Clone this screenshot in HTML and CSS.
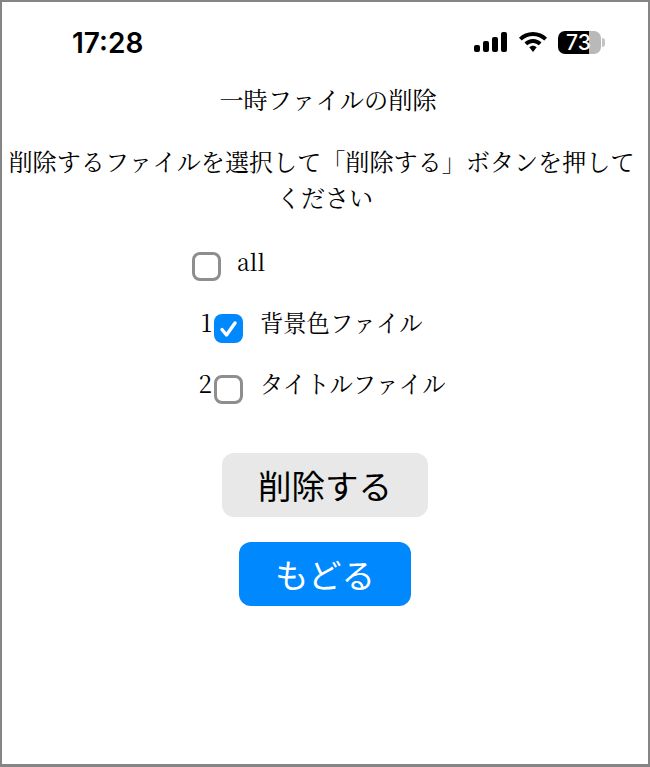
FILE: index.html
```html
<!DOCTYPE html>
<html lang="ja">
<head>
    <meta charset="UTF-8">
    <meta name="viewport" content="width=device-width, initial-scale=1.0">
    <title>一時ファイルの削除</title>
    <link rel="stylesheet" href="styles.css">
</head>
<body>
    <div class="screen">
        <div class="status-bar">
            <span class="clock">17:28</span>
            <div class="status-icons">
                <svg class="signal" width="33" height="20" viewBox="0 0 33 20">
                    <rect x="0" y="13" width="6" height="7" rx="2"/>
                    <rect x="9" y="9" width="6" height="11" rx="2"/>
                    <rect x="18" y="5" width="6" height="15" rx="2"/>
                    <rect x="27" y="0" width="6" height="20" rx="2"/>
                </svg>
                <svg class="wifi" width="28" height="20" viewBox="0 0 28 20">
                    <path d="M14 0 C19.500 0 24.500 2.200 28 5.800 L25.300 8.600 C22.400 5.700 18.400 3.900 14 3.900 C9.600 3.900 5.600 5.700 2.700 8.600 L0 5.800 C3.500 2.200 8.500 0 14 0 Z"/>
                    <path d="M14 7 C17.300 7 20.300 8.300 22.500 10.500 L19.800 13.300 C18.300 11.800 16.300 10.900 14 10.900 C11.700 10.900 9.700 11.800 8.200 13.300 L5.500 10.500 C7.700 8.300 10.700 7 14 7 Z"/>
                    <path d="M14 13.800 C15.500 13.800 16.700 14.400 17.700 15.300 L14 20 L10.300 15.300 C11.300 14.400 12.500 13.800 14 13.800 Z"/>
                </svg>
                <div class="battery">
                    <div class="battery-body"><span class="battery-level">73</span></div>
                    <div class="battery-nub"></div>
                </div>
            </div>
        </div>

        <h1 class="page-title">一時ファイルの削除</h1>
        <p class="lead">削除するファイルを選択して「削除する」ボタンを押してください</p>

        <div class="file-list">
            <div class="file-row row-all">
                <span class="check"></span>
                <span class="file-label">all</span>
            </div>
            <div class="file-row">
                <span class="file-no">1</span>
                <span class="check checked">
                    <svg width="29" height="29" viewBox="0 0 29 29"><path d="M8 15.500 L12.500 21 L21 9" fill="none" stroke="#fff" stroke-width="3.400" stroke-linecap="round" stroke-linejoin="round"/></svg>
                </span>
                <span class="file-label">背景色ファイル</span>
            </div>
            <div class="file-row">
                <span class="file-no">2</span>
                <span class="check"></span>
                <span class="file-label">タイトルファイル</span>
            </div>
        </div>

        <div class="actions">
            <button class="btn btn-delete">削除する</button>
            <button class="btn btn-back">もどる</button>
        </div>
    </div>
</body>
</html>
```

FILE: styles.css
```css
* {
    box-sizing: border-box;
}
body {
    margin: 0;
    background: #fff;
}
.screen {
    width: 650px;
    height: 767px;
    border: 2px solid #858585;
    border-bottom-width: 3px;
    overflow: hidden;
    font-family: "Noto Serif CJK JP", "Liberation Serif", "Noto Sans CJK JP", serif;
    color: #000;
}
.status-bar {
    display: flex;
    justify-content: space-between;
    align-items: center;
    height: 24px;
    margin-top: 28px;
    padding: 0 43px 0 70px;
}
.clock {
    font-family: Inter, "Liberation Sans", sans-serif;
    font-size: 28px;
    font-weight: 600;
    line-height: 24px;
    position: relative;
    top: 1px;
}
.status-icons {
    display: flex;
    align-items: center;
}
.signal {
    margin-right: 12px;
}
.wifi {
    margin-right: 11px;
}
.battery {
    display: flex;
    align-items: center;
}
.battery-body {
    width: 43px;
    height: 23px;
    border-radius: 7px;
    background: linear-gradient(90deg, #000 0, #000 31px, #b9b9b9 31px);
    color: #fff;
    font-family: Inter, "Liberation Sans", sans-serif;
    font-size: 21px;
    font-weight: 500;
    line-height: 23px;
    padding-left: 8px;
}
.battery-nub {
    width: 3px;
    height: 9px;
    margin-left: 1px;
    border-radius: 0 3px 3px 0;
    background: #c4c4c4;
}
.page-title {
    margin: 27px 0 0;
    font-size: 24.2px;
    font-weight: 400;
    line-height: 36px;
    text-align: center;
    text-indent: 6px;
}
.lead {
    margin: 26px 0 0;
    padding: 0 5px;
    font-size: 24.1px;
    line-height: 36px;
    text-align: center;
    text-indent: -7px;
}
.file-list {
    margin-top: 33px;
    padding-left: 190px;
}
.file-row {
    display: flex;
    align-items: flex-start;
    height: 61px;
    font-size: 24px;
    line-height: 28px;
}
.row-all {
    height: 60px;
}
.file-no {
    width: 20px;
    margin-right: 2px;
    text-align: right;
}
.check {
    width: 29px;
    height: 29px;
    margin-top: 6px;
    border: 3px solid #8e8e8e;
    border-radius: 8px;
    background: #fff;
    flex: none;
}
.check.checked {
    border: 0;
    background: #0088ff;
}
.check svg {
    display: block;
}
.file-label {
    margin-left: 17px;
    font-size: 23.300px;
    white-space: nowrap;
}
.row-all .file-label {
    margin-left: 16px;
    font-size: 23px;
}
.row-all .check {
    margin-top: 4px;
}
.actions {
    display: flex;
    flex-direction: column;
    align-items: center;
    gap: 25px;
    margin-top: 23px;
}
.btn {
    height: 64px;
    border: 0;
    border-radius: 12px;
    font-family: "Noto Sans CJK JP", sans-serif;
    font-size: 33.500px;
    line-height: 64px;
    padding: 0;
}
.btn-delete {
    width: 206px;
    background: #e8e8e8;
    color: #000;
}
.btn-back {
    width: 172px;
    background: #0088ff;
    color: #fff;
}
```
